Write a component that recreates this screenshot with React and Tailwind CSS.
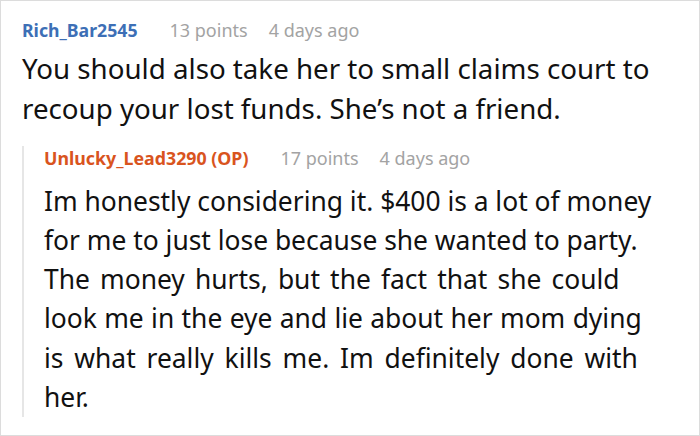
export default function App() {
  return (
    <div className="w-[700px] h-[436px] bg-white border border-[#dcdcdc] font-['Noto_Sans',sans-serif] overflow-hidden">
      <div className="pl-[21px] pt-[17px]">
        <div className="flex items-baseline leading-[24px] whitespace-nowrap">
          <span className="text-[17.7px] font-bold text-[#3d6fb6]">Rich_Bar2545</span>
          <span className="ml-[32px] text-[18px] text-[#a3a3a3]">13 points</span>
          <span className="ml-[21px] text-[18px] text-[#a3a3a3]">4 days ago</span>
        </div>
        <p className="mt-[7px] text-[27.7px] leading-[39.5px] text-[#111] whitespace-nowrap">
          You should also take her to small claims court to
          <br />
          recoup your lost funds. She’s not a friend.
        </p>
        <div className="mt-[28px] border-l-2 border-[#e6e6e6] pl-[20px] w-[660px]">
          <div className="-mt-[10px] flex items-baseline leading-[24px] whitespace-nowrap">
            <span className="text-[17.8px] font-bold text-[#d9541e]">Unlucky_Lead3290 (OP)</span>
            <span className="ml-[32px] text-[18px] text-[#a3a3a3]">17 points</span>
            <span className="ml-[21px] text-[18px] text-[#a3a3a3]">4 days ago</span>
          </div>
          <p className="mt-[11.5px] text-[26.4px] leading-[39.3px] text-[#111] whitespace-nowrap">
            Im honestly considering it. $400 is a lot of money
            <br />
            for me to just lose because she wanted to party.
            <br />
            <span className="[word-spacing:3.3px]">The money hurts, but the fact that she could</span>
            <br />
            <span className="[word-spacing:0.5px]">look me in the eye and lie about her mom dying</span>
            <br />
            <span className="[word-spacing:4px]">is what really kills me. Im definitely done with</span>
            <br />
            her.
          </p>
        </div>
      </div>
    </div>
  );
}
